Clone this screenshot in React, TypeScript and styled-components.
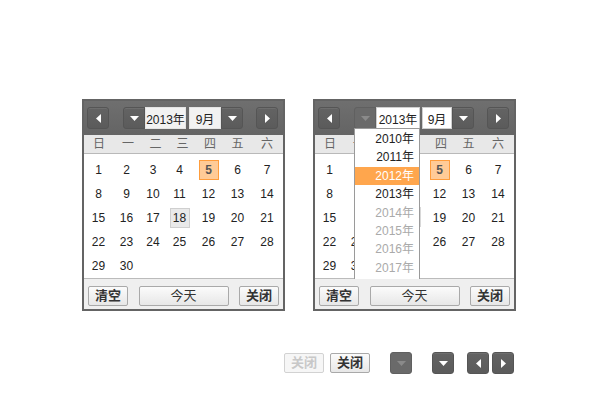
import React from "react";
import styled, { createGlobalStyle, css } from "styled-components";

const GlobalStyle = createGlobalStyle`
  html, body { margin: 0; padding: 0; background: #fff; }
  body {
    font-family: "Liberation Sans", "Noto Sans CJK SC", sans-serif;
    font-size: 12px;
    color: #333;
  }
`;

const Page = styled.div`
  padding: 99px 0 0 82px;
`;

const CalRow = styled.div`
  display: flex;
  gap: 28px;
`;

const Calendar = styled.div`
  position: relative;
  width: 199px;
  border: 2px solid #646464;
  background: #fff;
`;

const Header = styled.div`
  height: 34px;
  box-sizing: border-box;
  padding: 6px 5px 0 3px;
  display: flex;
  align-items: flex-start;
  background: linear-gradient(#6f6f6f, #646464);
`;

const NavButton = styled.button<{ $dim?: boolean; $gapLeft?: number }>`
  width: 22px;
  height: 22px;
  padding: 0;
  margin: 0 0 0 ${(p) => p.$gapLeft ?? 0}px;
  box-sizing: border-box;
  display: flex;
  align-items: center;
  justify-content: center;
  border: 1px solid #555;
  border-radius: 3px;
  background: linear-gradient(#636363, #5b5b5b);
  box-shadow: inset 0 1px 0 rgba(255, 255, 255, 0.07);
  cursor: pointer;
  ${(p) =>
    p.$dim &&
    css`
      background: #6a6a6a;
      border-color: #606060;
      box-shadow: none;
    `}
`;

const Glued = styled(NavButton)<{ $side: "left" | "right" }>`
  ${(p) =>
    p.$side === "left"
      ? css`border-top-right-radius: 0; border-bottom-right-radius: 0;`
      : css`border-top-left-radius: 0; border-bottom-left-radius: 0;`}
`;

const SelectBox = styled.div<{ $w: number; $open?: boolean; $gapLeft?: number }>`
  width: ${(p) => p.$w}px;
  height: 22px;
  margin-left: ${(p) => p.$gapLeft ?? 0}px;
  box-sizing: border-box;
  display: flex;
  align-items: center;
  justify-content: center;
  background: ${(p) => (p.$open ? "#fff" : "#f2f2f2")};
  border: 1px solid ${(p) => (p.$open ? "#cfcfcf" : "#e4e4e4")};
  font-size: 12px;
  color: #222;
  white-space: nowrap;
`;

const YearGroup = styled.div<{ $gapLeft: number }>`
  position: relative;
  display: flex;
  margin-left: ${(p) => p.$gapLeft}px;
`;

const YearList = styled.div`
  position: absolute;
  left: 0;
  top: 21px;
  width: 66px;
  height: 151px;
  box-sizing: border-box;
  padding-top: 1px;
  background: #fff;
  border: 1px solid #9a9a9a;
  border-bottom: none;
  z-index: 2;
`;

const ScrollHint = styled.div`
  position: absolute;
  right: -2px;
  top: 78px;
  width: 1px;
  height: 20px;
  background: #d8d8d8;
`;

const YearItem = styled.div<{ $active?: boolean; $muted?: boolean }>`
  height: 18.4px;
  line-height: 18.4px;
  text-align: right;
  padding-right: 5px;
  font-size: 12px;
  color: ${(p) => (p.$active ? "#fff" : p.$muted ? "#aaa" : "#222")};
  background: ${(p) => (p.$active ? "#ffa64d" : "transparent")};
`;

const WeekRow = styled.div`
  display: grid;
  grid-template-columns: 30px 28px 27px 27px 28px 27px 32px;
  height: 18px;
  align-items: center;
  background: #e8e8e8;
  border-bottom: 1px solid #b9b9b9;
`;

const WeekCell = styled.span<{ $covered?: boolean }>`
  text-align: center;
  font-size: 12px;
  color: #666;
  line-height: 18px;
  visibility: ${(p) => (p.$covered ? "hidden" : "visible")};
`;

const Body = styled.div`
  height: 124px;
  box-sizing: border-box;
  padding-top: 4px;
  display: grid;
  grid-template-columns: 29px 27px 26px 27px 31px 27px 32px;
  grid-auto-rows: 24px;
`;

const DayCell = styled.div`
  display: flex;
  align-items: center;
  justify-content: center;
`;

const DayMark = styled.span<{ $kind?: "today" | "sel"; $covered?: boolean }>`
  width: 20px;
  height: 20px;
  box-sizing: border-box;
  display: flex;
  align-items: center;
  justify-content: center;
  font-size: 12px;
  color: #222;
  border: 1px solid transparent;
  visibility: ${(p) => (p.$covered ? "hidden" : "visible")};
  ${(p) =>
    p.$kind === "today" &&
    css`
      background: #ffcb97;
      border-color: #ff9d3c;
      font-weight: bold;
      color: #555;
    `}
  ${(p) =>
    p.$kind === "sel" &&
    css`
      background: #e9e9e9;
      border-color: #cfcfcf;
    `}
`;

const Footer = styled.div`
  height: 31px;
  box-sizing: border-box;
  border-top: 1px solid #bbb;
  background: #efefef;
  display: flex;
  justify-content: space-between;
  align-items: flex-start;
  padding: 7px 4px 0 4px;
`;

const FootButton = styled.button<{ $w: number; $plain?: boolean; $disabled?: boolean }>`
  width: ${(p) => p.$w}px;
  height: 20px;
  padding: 0;
  box-sizing: border-box;
  border: 1px solid #a9a9a9;
  border-radius: 2px;
  background: linear-gradient(#fbfbfb, #e7e7e7);
  font-family: "Liberation Sans", "Noto Sans CJK SC", sans-serif;
  font-size: 13px;
  line-height: 18px;
  font-weight: ${(p) => (p.$plain ? "normal" : "bold")};
  color: #333;
  cursor: pointer;
  ${(p) =>
    p.$disabled &&
    css`
      color: #c8c8c8;
      border-color: #d2d2d2;
      background: #f6f6f6;
    `}
`;

const BottomRow = styled.div`
  display: flex;
  align-items: center;
  margin-top: 41px;
  padding-left: 202px;
  height: 22px;
`;

const Spacer = styled.div<{ $w: number }>`
  width: ${(p) => p.$w}px;
  flex: none;
`;

const Arrow = ({ dir, color = "#fff" }: { dir: "down" | "left" | "right"; color?: string }) => {
  if (dir === "down")
    return (
      <svg width="9" height="5" viewBox="0 0 9 5">
        <polygon points="0,0 9,0 4.5,5" fill={color} />
      </svg>
    );
  if (dir === "left")
    return (
      <svg width="5" height="9" viewBox="0 0 5 9">
        <polygon points="5,0 5,9 0,4.5" fill={color} />
      </svg>
    );
  return (
    <svg width="5" height="9" viewBox="0 0 5 9">
      <polygon points="0,0 0,9 5,4.5" fill={color} />
    </svg>
  );
};

const weekdays = ["日", "一", "二", "三", "四", "五", "六"];
const years = [2010, 2011, 2012, 2013, 2014, 2015, 2016, 2017];

const days: number[] = [];
for (let d = 1; d <= 30; d++) days.push(d);

function Cal({ open }: { open?: boolean }) {
  return (
    <Calendar>
      <Header>
        <NavButton>
          <Arrow dir="left" />
        </NavButton>
        <YearGroup $gapLeft={14}>
          <Glued $side="left" $dim={open}>
            <Arrow dir="down" color={open ? "#8a8a8a" : "#fff"} />
          </Glued>
          <SelectBox $w={open ? 44 : 41} $open={open}>
            2013年
          </SelectBox>
          {open && (
            <YearList>
              {years.map((y) => (
                <YearItem key={y} $active={y === 2012} $muted={y > 2013}>
                  {y}年
                </YearItem>
              ))}
              <ScrollHint />
            </YearList>
          )}
        </YearGroup>
        <SelectBox $w={open ? 30 : 32} $open={open} $gapLeft={open ? 2 : 3}>
          9月
        </SelectBox>
        <Glued $side="right">
          <Arrow dir="down" />
        </Glued>
        <NavButton $gapLeft={13}>
          <Arrow dir="right" />
        </NavButton>
      </Header>
      <WeekRow>
        {weekdays.map((w, i) => (
          <WeekCell key={w} $covered={!!open && (i === 2 || i === 3)}>
            {w}
          </WeekCell>
        ))}
      </WeekRow>
      <Body>
        {days.map((d) => {
          const col = (d - 1) % 7;
          const covered = !!open && col >= 1 && col <= 3 && d !== 23 && d !== 30;
          return (
            <DayCell key={d}>
              <DayMark
                $covered={covered}
                $kind={d === 5 ? "today" : d === 18 && !open ? "sel" : undefined}
              >
                {d}
              </DayMark>
            </DayCell>
          );
        })}
      </Body>
      <Footer>
        <FootButton $w={40}>清空</FootButton>
        <FootButton $w={90} $plain>
          今天
        </FootButton>
        <FootButton $w={40}>关闭</FootButton>
      </Footer>
    </Calendar>
  );
}

export default function App() {
  return (
    <>
      <GlobalStyle />
      <Page>
        <CalRow>
          <Cal />
          <Cal open />
        </CalRow>
        <BottomRow>
          <FootButton $w={40} $disabled>
            关闭
          </FootButton>
          <Spacer $w={6} />
          <FootButton $w={40}>关闭</FootButton>
          <Spacer $w={20} />
          <NavButton $dim>
            <Arrow dir="down" color="#8a8a8a" />
          </NavButton>
          <Spacer $w={20} />
          <NavButton>
            <Arrow dir="down" />
          </NavButton>
          <Spacer $w={13} />
          <NavButton>
            <Arrow dir="left" />
          </NavButton>
          <Spacer $w={3} />
          <NavButton>
            <Arrow dir="right" />
          </NavButton>
        </BottomRow>
      </Page>
    </>
  );
}
